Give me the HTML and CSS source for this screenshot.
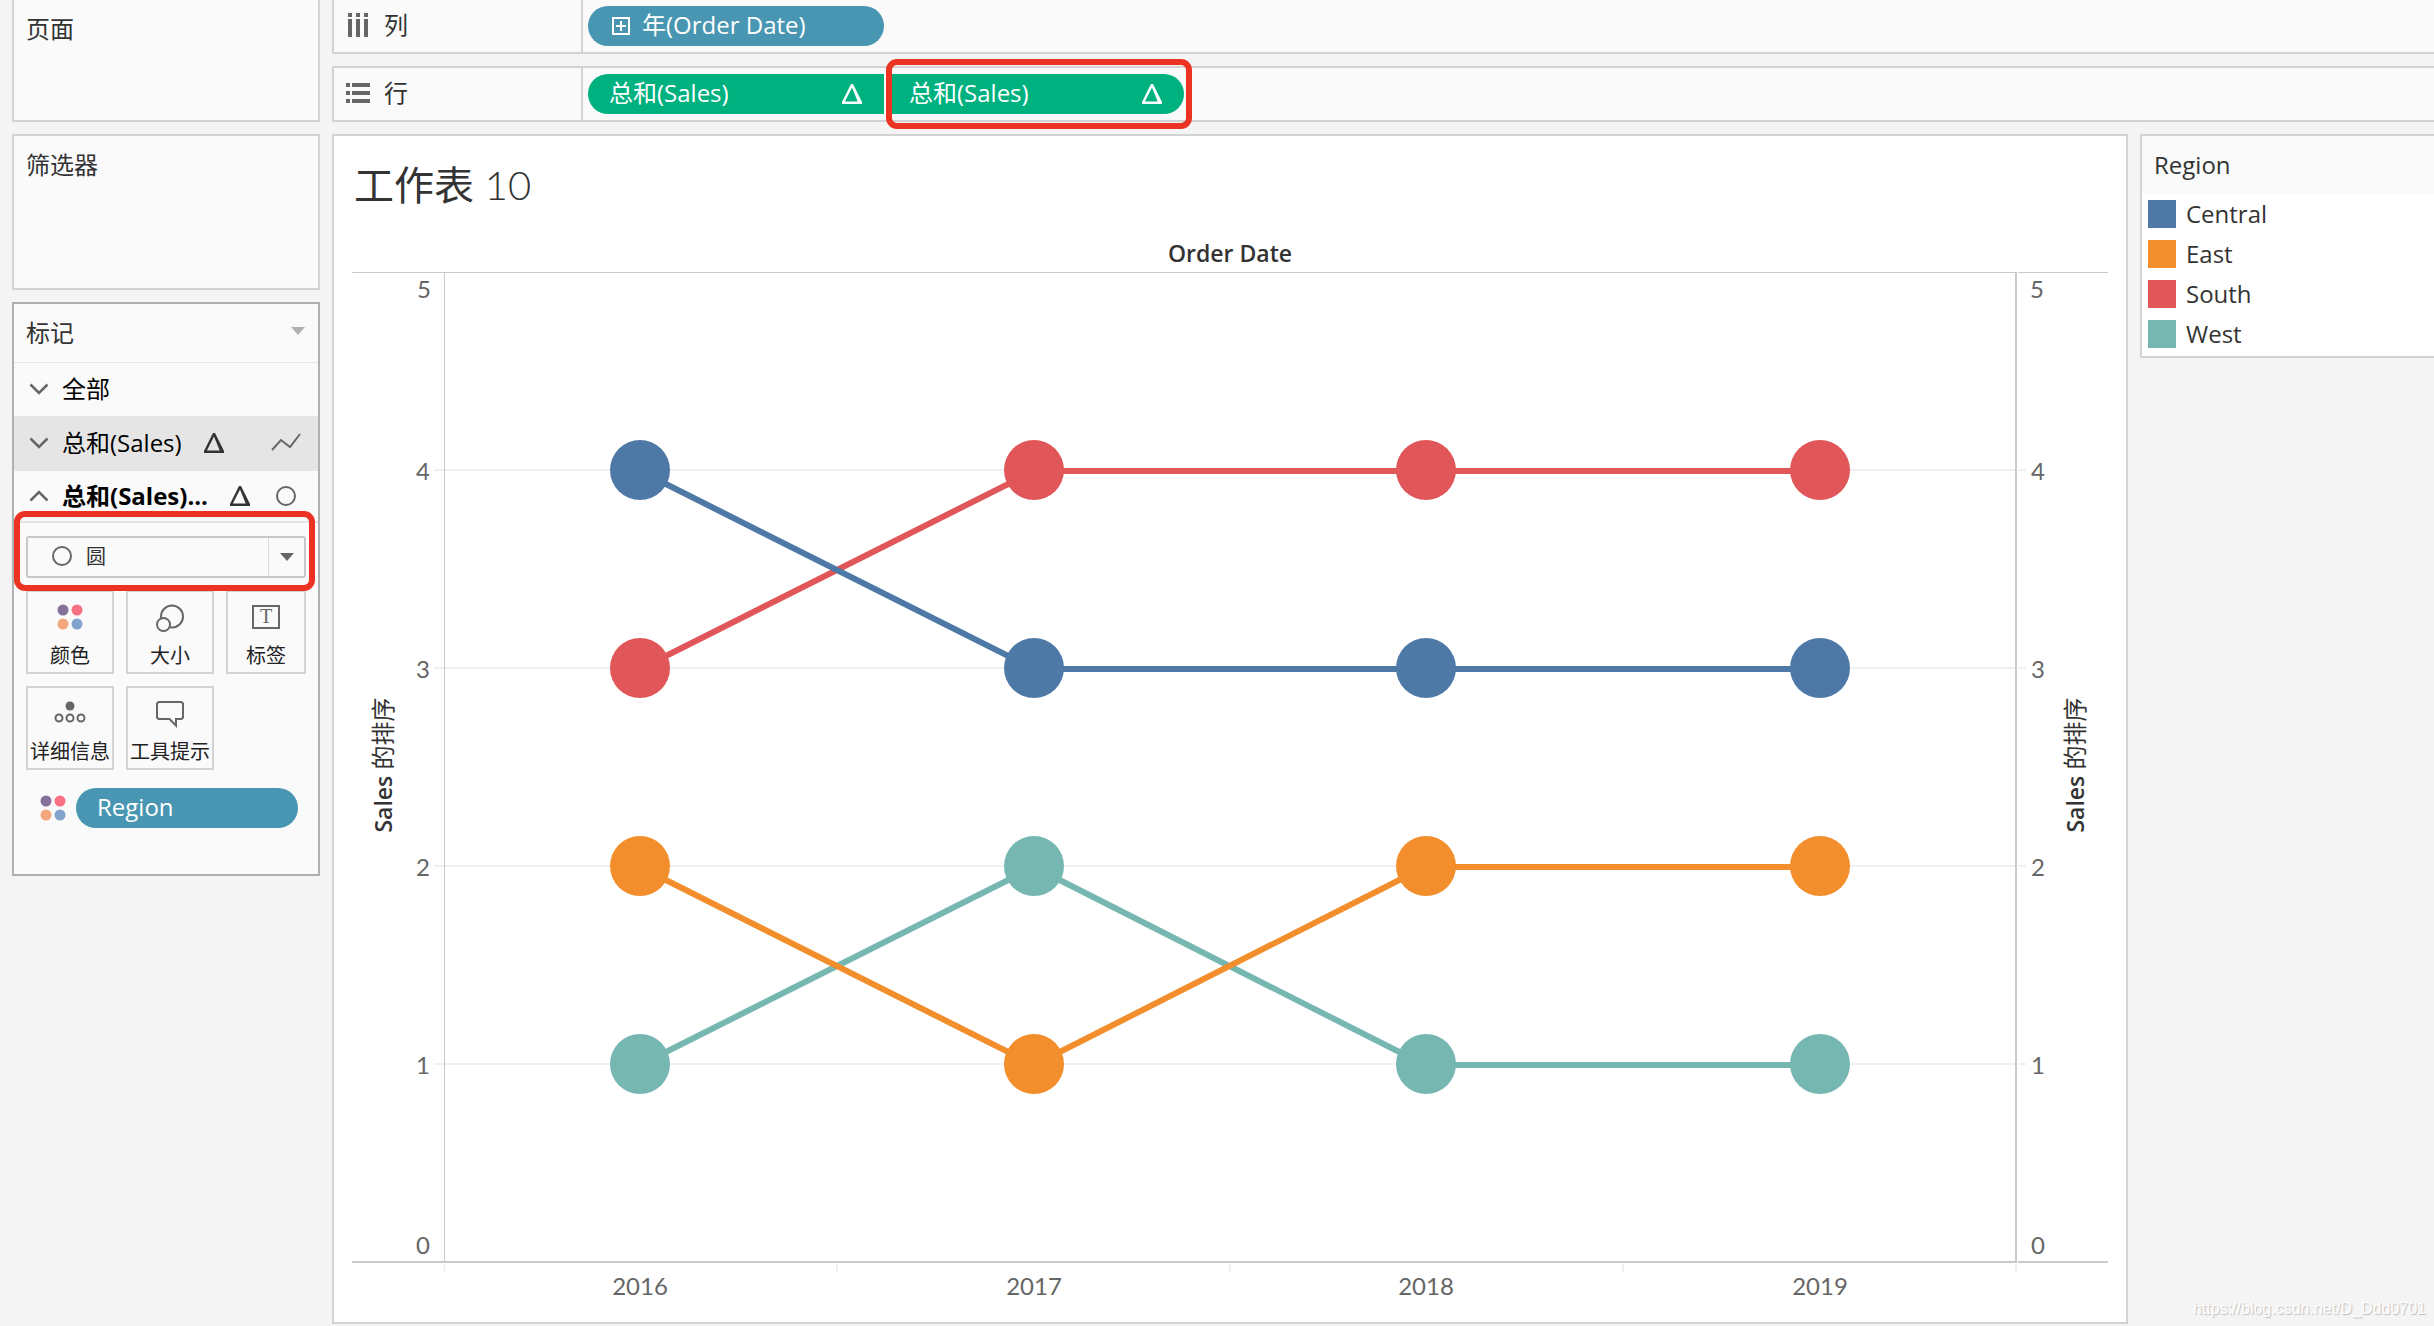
FILE: index.html
```html
<!DOCTYPE html>
<html lang="zh-CN">
<head>
<meta charset="utf-8">
<meta name="viewport" content="width=device-width, initial-scale=1">
<title>工作表 10</title>
<link rel="stylesheet" href="styles.css">
</head>
<body>
<svg class="defs" aria-hidden="true">
  <symbol id="delta" viewBox="0 0 22 22"><path d="M10 1h2l9 18v2H1v-2z M11 4.500 3.900 18.500h12.800z" fill="currentColor" fill-rule="evenodd"/></symbol>
  <symbol id="ring" viewBox="0 0 22 22"><circle cx="11" cy="11" r="9" fill="none" stroke="#666" stroke-width="2"/></symbol>
  <symbol id="chevron" viewBox="0 0 20 12"><path d="M1.500 1.500 10 10l8.500-8.500" fill="none" stroke="#666" stroke-width="2.500"/></symbol>
  <symbol id="dots" viewBox="0 0 26 26"><circle cx="6" cy="6" r="5.500" fill="#86719a"/><circle cx="20" cy="6" r="5.500" fill="#f97283"/><circle cx="6" cy="20" r="5.500" fill="#f4a67c"/><circle cx="20" cy="20" r="5.500" fill="#82a4cc"/></symbol>
</svg>
<div class="workspace">
  <aside class="side">
    <section class="panel panel-pages"><h2>页面</h2></section>
    <section class="panel panel-filters"><h2>筛选器</h2></section>
    <section class="panel marks">
      <header class="marks-head"><h2>标记</h2>
        <svg class="caret" width="14" height="8" viewBox="0 0 14 8"><path d="M0 0h14L7 8z" fill="#b0b0b0"/></svg>
      </header>
      <button class="layer" type="button"><svg class="chev"><use href="#chevron"/></svg><span>全部</span></button>
      <button class="layer layer-shaded" type="button"><svg class="chev"><use href="#chevron"/></svg><span class="layer-name">总和(Sales)</span><svg class="ico"><use href="#delta"/></svg>
        <svg class="line-type" width="30" height="20" viewBox="0 0 30 20"><path d="M1 17 10 7l9 7L29 1" fill="none" stroke="#666" stroke-width="2"/></svg></button>
      <button class="layer layer-open" type="button"><svg class="chev chev-up"><use href="#chevron"/></svg><span class="layer-name">总和(Sales)...</span><svg class="ico"><use href="#delta"/></svg><svg class="ico mark-type"><use href="#ring"/></svg></button>
      <div class="marks-body">
        <div class="mark-select">
          <select aria-label="标记类型"><option>圆</option></select>
          <svg class="ico select-ring"><use href="#ring"/></svg>
          <span class="select-arrow"><svg width="14" height="8" viewBox="0 0 14 8"><path d="M0 0h14L7 8z" fill="#666"/></svg></span>
          <span class="callout callout-select"></span>
        </div>
        <div class="shelves-grid">
          <button type="button" class="tile"><svg width="26" height="26"><use href="#dots"/></svg>颜色</button>
          <button type="button" class="tile"><svg width="30" height="28" viewBox="0 0 30 28" fill="#fafafa" stroke="#666" stroke-width="2"><circle cx="17" cy="12.500" r="11"/><circle cx="8.500" cy="20.500" r="6.500"/></svg>大小</button>
          <button type="button" class="tile"><svg width="28" height="26" viewBox="0 0 28 26"><rect x="1" y="2" width="26" height="22" fill="none" stroke="#666" stroke-width="2"/><text x="14" y="19" class="t-glyph">T</text></svg>标签</button>
          <button type="button" class="tile"><svg width="32" height="26" viewBox="0 0 32 26" fill="none" stroke="#666" stroke-width="2"><circle cx="16" cy="6" r="4.500" fill="#666" stroke="none"/><circle cx="5" cy="18" r="3.500"/><circle cx="16" cy="18" r="3.500"/><circle cx="27" cy="18" r="3.500"/></svg>详细信息</button>
          <button type="button" class="tile"><svg width="28" height="28" viewBox="0 0 28 28"><path d="M2.500 2h23l1.500 1.500v14L25.500 19H20v6.500L13.500 19h-11L1 17.500v-14z" fill="none" stroke="#666" stroke-width="2"/></svg>工具提示</button>
        </div>
        <div class="encoding"><svg width="26" height="26"><use href="#dots"/></svg><button type="button" class="pill pill-blue pill-region">Region</button></div>
      </div>
    </section>
  </aside>
  <main class="main">
    <section class="shelf shelf-first">
      <div class="shelf-name"><svg width="24" height="24" viewBox="0 0 24 24" fill="#666"><path d="M2 0h4v4H2zM10 0h4v4h-4zM18 0h4v4h-4zM2 6h4v18H2zM10 6h4v18h-4zM18 6h4v18h-4z"/></svg>列</div>
      <div class="shelf-pills"><button type="button" class="pill pill-blue"><svg class="plus" width="18" height="18" viewBox="0 0 18 18" fill="none" stroke="currentColor" stroke-width="2"><path d="M1 1h16v16H1zM4 9h10M9 4v10"/></svg>年(Order Date)</button></div>
    </section>
    <section class="shelf">
      <div class="shelf-name"><svg width="24" height="24" viewBox="0 0 24 24" fill="#666"><path d="M0 2h4v4H0zM0 10h4v4H0zM0 18h4v4H0zM6 2h18v4H6zM6 10h18v4H6zM6 18h18v4H6z"/></svg>行</div>
      <div class="shelf-pills">
        <button type="button" class="pill pill-green pill-left"><span>总和(Sales)</span><svg class="ico"><use href="#delta"/></svg></button>
        <div class="pill-wrap"><button type="button" class="pill pill-green pill-right"><span>总和(Sales)</span><svg class="ico"><use href="#delta"/></svg></button><span class="callout callout-pill"></span></div>
      </div>
    </section>
    <div class="view">
      <article class="sheet">
        <h1><span class="sheet-word">工作表</span> 10</h1>
        <h3>Order Date</h3>
        <svg class="chart" viewBox="0 0 1756 1036" role="img" aria-label="Sales 的排序">
          <g class="grid"><path d="M82 198h1592M82 396h1592M82 594h1592M82 792h1592"/></g>
          <g class="ticks"><path d="M92.500 992v8M485 992v8M878 992v8M1271 992v8M1664 992v8"/></g>
          <path class="axis-thin" d="M0 .5h1756M92.500 0v990"/>
          <path class="gap" d="M1665.500 0v992"/>
          <path class="axis" d="M0 990h1665M1666 990h90M1664 0v991"/>
          <g class="lines">
            <path class="c-west" d="M288 793 682 595 1073 793H1468"/>
            <path class="c-south" d="M288 397 682 199H1468"/>
            <path class="c-east" d="M288 595 682 793 1073 595H1468"/>
            <path class="c-central" d="M288 199 682 397H1468"/>
          </g>
          <g class="dots">
            <g class="f-central"><circle cx="288" cy="198" r="30"/><circle cx="682" cy="396" r="30"/><circle cx="1074" cy="396" r="30"/><circle cx="1468" cy="396" r="30"/></g>
            <g class="f-south"><circle cx="288" cy="396" r="30"/><circle cx="682" cy="198" r="30"/><circle cx="1074" cy="198" r="30"/><circle cx="1468" cy="198" r="30"/></g>
            <g class="f-east"><circle cx="288" cy="594" r="30"/><circle cx="682" cy="792" r="30"/><circle cx="1074" cy="594" r="30"/><circle cx="1468" cy="594" r="30"/></g>
            <g class="f-west"><circle cx="288" cy="792" r="30"/><circle cx="682" cy="594" r="30"/><circle cx="1074" cy="792" r="30"/><circle cx="1468" cy="792" r="30"/></g>
          </g>
          <g class="num">
            <text x="72" y="26">5</text><text x="71" y="208">4</text><text x="71" y="406">3</text><text x="71" y="604">2</text><text x="71" y="802">1</text><text x="71" y="982">0</text>
            <text x="1685" y="26">5</text><text x="1686" y="208">4</text><text x="1686" y="406">3</text><text x="1686" y="604">2</text><text x="1686" y="802">1</text><text x="1686" y="982">0</text>
            <text x="288" y="1023">2016</text><text x="682" y="1023">2017</text><text x="1074" y="1023">2018</text><text x="1468" y="1023">2019</text>
          </g>
          <g class="axis-title">
            <text transform="translate(40 493) rotate(-90)"><tspan class="latin">Sales</tspan> 的排序</text>
            <text transform="translate(1732 493) rotate(-90)"><tspan class="latin">Sales</tspan> 的排序</text>
          </g>
        </svg>
      </article>
      <aside class="legend">
        <h2>Region</h2>
        <ul>
          <li><i class="f-central"></i>Central</li>
          <li><i class="f-east"></i>East</li>
          <li><i class="f-south"></i>South</li>
          <li><i class="f-west"></i>West</li>
        </ul>
      </aside>
    </div>
  </main>
</div>
<div class="watermark">https://blog.csdn.net/D_Ddd0701</div>
</body>
</html>
```
FILE: styles.css
```css
* { box-sizing: border-box; }
body {
  margin: 0;
  background: #f4f4f4;
  color: #333;
  font: 24px/32px "Open Sans", "Noto Sans CJK SC", sans-serif;
}
h1, h2, h3, ul { margin: 0; padding: 0; }
h2 { font-size: 24px; line-height: 32px; font-weight: 400; }
button { font: inherit; color: inherit; border: 0; padding: 0; margin: 0; background: none; text-align: left; }
svg { display: block; flex: none; }
.defs { width: 0; height: 0; position: absolute; }
.ico { width: 22px; height: 22px; }

.workspace { display: grid; grid-template-columns: 308px minmax(0, 1fr); gap: 12px; padding-left: 12px; align-items: start; }
.side, .main { display: flex; flex-direction: column; gap: 12px; }

.panel { background: #fafafa; border: 2px solid #d3d3d3; padding: 13px 12px; }
.panel-pages { min-height: 122px; border-top: 0; }
.panel-filters { min-height: 156px; }

.marks { border-color: #b0b0b0; padding: 0; }
.marks-head { display: flex; align-items: center; justify-content: space-between; height: 59px; padding: 0 13px 0 12px; border-bottom: 1px solid #e4e4e4; }
.caret { margin-bottom: 4px; }
.layer { display: flex; align-items: center; width: 100%; height: 53px; padding: 0 17px 2px 15px; color: #000; }
.layer-shaded { height: 55px; background: #e5e5e5; }
.layer-open { height: 52px; padding-bottom: 0; border-bottom: 2px solid #e4e4e4; font-weight: 700; }
.chev { width: 20px; height: 12px; margin-right: 13px; }
.chev-up { transform: scaleY(-1); }
.layer .ico { margin-left: 21px; color: #333; }
.line-type { margin-left: auto; }
.layer .mark-type { margin-left: auto; margin-right: 4px; }
.marks-body { padding: 13px 12px 46px; }

.mark-select { position: relative; margin-bottom: 12px; }
.mark-select select {
  display: block; width: 100%; height: 42px; padding: 0 48px 0 58px;
  appearance: none; border: 2px solid #c8c8c8; border-radius: 3px; background: #fafafa;
  color: #333; font: inherit; font-size: 20px;
}
.select-ring { position: absolute; left: 25px; top: 9px; }
.select-arrow { position: absolute; right: 2px; top: 2px; bottom: 2px; width: 36px; border-left: 1px solid #ddd; display: grid; place-items: center; pointer-events: none; }
.callout { position: absolute; border: 6px solid #ec3323; border-radius: 11px; pointer-events: none; }
.callout-select { left: -12px; right: -9px; top: -25px; bottom: -13px; }

.shelves-grid { display: grid; grid-template-columns: 88fr 88fr 80fr; gap: 12px; }
.tile { display: flex; flex-direction: column; align-items: center; justify-content: space-between; height: 84px; padding: 12px 0 2px; border: 2px solid #d3d3d3; font-size: 20px; line-height: 28px; white-space: nowrap; color: #222; }
.t-glyph { font: 20px "Liberation Serif", serif; text-anchor: middle; fill: #666; }
.encoding { display: flex; align-items: center; gap: 10px; margin-top: 18px; padding: 0 8px 0 14px; }

.pill { display: flex; align-items: center; width: 296px; height: 40px; padding: 0 21px 2px; border-radius: 20px; color: #fff; }
.pill-blue { background: #4996b2; }
.pill-green { background: #00b180; justify-content: space-between; }
.pill-left { border-radius: 20px 0 0 20px; }
.pill-right { border-radius: 0 20px 20px 0; }
.pill-region { flex: 1; width: auto; }
.plus { margin: 2px 12px 0 3px; }
.pill .ico { margin-top: 2px; }
.pill-wrap { position: relative; }
.callout-pill { left: -2px; right: -8px; top: -15px; bottom: -15px; }

.shelf { display: flex; height: 56px; background: #fafafa; border: 2px solid #d3d3d3; border-right: 0; }
.shelf-first { height: 54px; border-top: 0; }
.shelf-name { display: flex; align-items: center; gap: 14px; width: 249px; padding: 0 12px 2px; border-right: 2px solid #d3d3d3; }
.shelf-pills { display: flex; gap: 4px; padding: 6px 5px; }

.view { display: grid; grid-template-columns: minmax(0, 1fr) 294px; gap: 12px; align-items: start; }
.sheet { background: #fff; border: 2px solid #d3d3d3; padding: 21px 18px 14px; }
.sheet h1 { padding-left: 2px; font: 300 40px/56px Lato, "Noto Sans CJK SC", sans-serif; }
.sheet-word { font-weight: 400; }
.sheet h3 { margin: 24px 0 3px; font-size: 23px; line-height: 32px; font-weight: 600; text-align: center; }
.chart { width: 100%; height: auto; }
.grid path { stroke: #f0f0f0; stroke-width: 2; }
.ticks path { stroke: #f0f0f0; stroke-width: 2; }
.axis-thin { fill: none; stroke: #cacaca; stroke-width: 1; }
.gap { stroke: #fff; stroke-width: 1; }
.axis { fill: none; stroke: #cacaca; stroke-width: 2; }
.lines path { fill: none; stroke-width: 6; stroke-linejoin: round; }
.num { font: 24px Lato, sans-serif; fill: #666; text-anchor: middle; }
.axis-title { font: 400 24px "Open Sans", "Noto Sans CJK SC", sans-serif; fill: #333; text-anchor: middle; }
.latin { font-size: 23px; font-weight: 600; }
.c-central { stroke: #4e79a7; }
.c-east { stroke: #f28e2b; }
.c-south { stroke: #e15759; }
.c-west { stroke: #76b7b2; }
.f-central { fill: #4e79a7; background: #4e79a7; }
.f-east { fill: #f28e2b; background: #f28e2b; }
.f-south { fill: #e15759; background: #e15759; }
.f-west { fill: #76b7b2; background: #76b7b2; }

.legend { background: #fff; border: 2px solid #d3d3d3; border-right: 0; }
.legend h2 { padding: 13px 12px; background: #fafafa; }
.legend ul { display: flex; flex-direction: column; gap: 8px; padding: 4px 6px 6px; list-style: none; }
.legend li { display: flex; align-items: center; gap: 10px; }
.legend i { width: 28px; height: 28px; }

.watermark { position: absolute; right: 8px; bottom: 8px; font: 16px/18px "Liberation Sans", Arial, sans-serif; color: #fff; text-shadow: 1px 1px 1px #bbb; }
```
